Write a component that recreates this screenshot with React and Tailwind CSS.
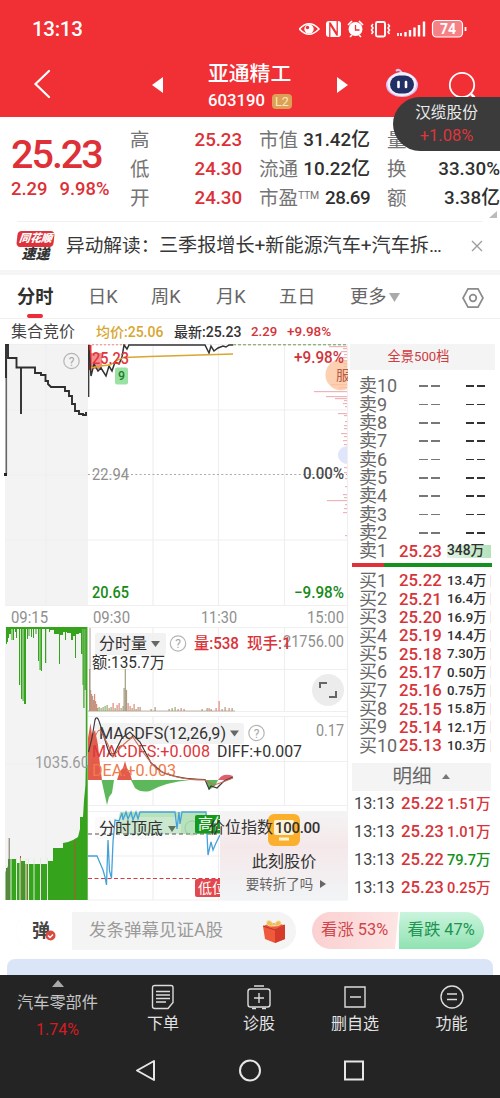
import React from 'react';

const sells = [10, 9, 8, 7, 6, 5, 4, 3, 2];
const buys = [
  ['25.22', '13.4万'], ['25.21', '16.4万'], ['25.20', '16.9万'], ['25.19', '14.4万'], ['25.18', '7.30万'],
  ['25.17', '0.50万'], ['25.16', '0.75万'], ['25.15', '15.8万'], ['25.14', '12.1万'], ['25.13', '10.3万'],
];
const trades = [['25.22', '1.51万', true], ['25.23', '1.01万', true], ['25.22', '79.7万', false], ['25.23', '0.25万', true]];

function T({ x, y, w, s = 16, fill = '#8f8f8f', weight = 400, children }) {
  return (
    <text x={x} y={y + s * 0.36} fontSize={s} fill={fill} fontWeight={weight} textLength={w} lengthAdjust="spacingAndGlyphs">
      {children}
    </text>
  );
}

function Help({ x, y }) {
  return (
    <g>
      <circle cx={x} cy={y} r="7.7" fill="none" stroke="#b5b5b5" strokeWidth="1.2" />
      <text x={x} y={y + 4.5} fontSize="12" textAnchor="middle" fill="#a8a8a8">?</text>
    </g>
  );
}

// Call-auction bars hanging from the top edge: [x, width, bottom]
const hang = [
  [6, 1, 644], [7, 1, 642], [8, 1, 638], [9, 2, 634], [11.5, 1, 640], [13, 1, 640], [15, 1, 632], [16, 1, 638], [19, 1.2, 685],
  [21, 1.3, 699], [22.6, 1, 701], [24, 2, 704], [27, 1, 639], [28.5, 1, 636], [31, 1, 637], [33, 1, 638], [35.5, 1, 634],
  [38, 1, 661], [39.5, 1.2, 670], [41, 1, 671], [45, 1.2, 663], [49, 1, 632], [50, 4, 630], [54, 5, 634], [59, 1, 664],
  [60, 3, 635], [63, 4, 632], [65, 1, 640], [67, 4, 633], [71, 2, 640], [73, 3, 636], [75, 1, 658], [76, 3, 634],
  [79, 2, 633], [81, 1.5, 654], [82.5, 1, 685], [83.3, 1.2, 708], [84.5, 1.3, 690], [85.8, 1, 900],
];

// Turnover bars: [x, top, colour]
const vol = [
  [89.5, 669, '#a79b80'], [90.5, 690, '#a79b80'], [91.5, 694, '#e2867a'], [92.5, 696, '#a8a68a'], [93.5, 700, '#e2867a'], [94.5, 694, '#e2867a'],
  [95.5, 701, '#a8a68a'], [96.5, 704, '#e2867a'], [97.5, 708, '#8fae6e'], [99, 707, '#8fae6e'], [101, 708, '#8fae6e'],
  [103, 707, '#8fae6e'], [105, 706, '#8fae6e'], [107, 705, '#8fae6e'], [109, 708, '#e2867a'], [111, 707, '#8fae6e'],
  [113, 703, '#e2867a'], [115, 708, '#8fae6e'], [117, 705, '#e2867a'], [119, 703, '#e2867a'], [121, 708, '#8fae6e'],
  [123, 706, '#a79b80'], [124, 688, '#a79b80'], [125.2, 669, '#a79b80'], [126.4, 690, '#a79b80'], [128, 703, '#e2867a'],
  [130, 706, '#e2867a'], [132, 708, '#8fae6e'], [134, 704, '#e2867a'], [136, 709, '#8fae6e'], [138, 707, '#e2867a'],
  [140, 707, '#a79b80'], [151, 709, '#a79b80'], [155, 707, '#a79b80'], [169, 709, '#a79b80'], [172, 708, '#a79b80'],
  [175, 707, '#8fae6e'], [178, 709, '#a79b80'], [181, 708, '#e2867a'], [184, 709, '#a79b80'], [202, 709, '#a79b80'],
  [207, 708, '#a79b80'], [209, 708, '#e2867a'], [211, 709, '#a79b80'], [216, 708, '#e2867a'], [219, 701, '#e2867a'],
  [222, 709, '#a79b80'], [225, 707, '#a79b80'], [229, 708, '#e2867a'], [232, 708, '#a79b80'],
];

// Price distribution lines along the right edge: [y, width]
const dist = [
  [346, 18], [348, 4], [351, 6], [354, 3], [357, 5], [360, 3], [363, 4], [366, 3], [384, 16], [387, 8], [391, 33], [396, 21], [398, 12],
  [400, 3], [403, 4], [406, 2], [413, 9], [415, 3], [421, 2], [425, 3], [428, 3], [433, 6], [436, 3], [440, 4], [444, 3], [447, 3],
  [450, 2], [453, 4], [457, 3], [462, 3], [467, 3], [472, 3], [478, 2], [486, 2], [494, 4], [497, 3], [500, 20], [504, 2],
  [508, 3], [512, 4], [535, 2],
];

const gaps = [11, 16.5, 20, 26, 28.5, 34, 40.5, 47.5];

function Chart() {
  return (
    <svg className="block" width="350" height="562" viewBox="0 344 350 562">
      {/* grid */}
      <rect x="5" y="344" width="83" height="261" fill="#f3f3f3" />
      <rect x="5" y="627" width="83" height="273" fill="#f3f3f3" />
      <g stroke="#efefef" strokeWidth="1.2">
        <path d="M46 344V605M153 344V605M218.5 344V605M284.5 344V605M5 410H347M5 475H88M5 540H347M5 605.5H347M5 344.5H347" />
        <path d="M46 627V900M153 627V711M218.5 627V711M284.5 627V711M88 627.5H347M88 669.5H347M88 711.5H347M153 717V805M218.5 717V805M284.5 717V805M88 716.5H347M88 761.5H347M88 805.5H347" />
        <path d="M88 811.5H347M88 856H347M88 900H347M153 811V900M218.5 811V900M347.5 344V900M5 764H88" />
      </g>
      <path d="M88 474.5H347" stroke="#aaa" strokeWidth="1" strokeDasharray="2 2.3" />
      <path d="M88 344.8H129" stroke="#e88" strokeWidth="1" strokeDasharray="2 2" />

      {/* price distribution */}
      <g fill="#eeb4b9">
        {dist.map(([y, w]) => <rect key={y} x={347 - w} y={y} width={w} height="1.2" />)}
      </g>
      <path d="M347 360.500A15.500 15.500 0 1 0 347 389z" fill="#fbc49c" fillOpacity=".8" />
      <path d="M347 446q-9 2-9 9t9 9z" fill="#dfe5fb" />
      <svg x="336" y="364" width="12" height="20" viewBox="0 0 12 20"><text x="0" y="15.500" fontSize="14" fill="#b75a46">服</text></svg>

      {/* call auction price */}
      <path d="M6.300 360V474" stroke="#666" strokeWidth="1.6" />
      <rect x="4" y="473" width="3" height="3" fill="#222" />
      <path d="M6 378V345H8V358H16.500V367.500H35V373H41V375H45.500V381H48V384L51 387H65V391H69V396H72V404H75V411H79V414H83V415H86V412M21 367.500V414M8 345V358" fill="none" stroke="#2e2e2e" strokeWidth="1.9" />

      {/* intraday price */}
      <rect x="88" y="345" width="3.500" height="25" fill="#e92f36" />
      <rect x="90" y="353" width="12" height="16" rx="1" fill="#e92f36" fillOpacity=".55" />
      <path d="M88.700 345V397" stroke="#333" strokeWidth="1.3" />
      <path d="M89 350L91 376L94 364L98 371L101 368L106 376L109 366L112 371L115 362L119 364L122 357L124 345L127 349L129 345H205L209 353L211 346L214 351L218 348L223 346L226 347L229 345H233" fill="none" stroke="#333" strokeWidth="1.5" />
      <path d="M91 368L100 366L110 365L118 360L124 357.500L150 356.500L233 354" fill="none" stroke="#dba62b" strokeWidth="1.3" />
      <path d="M233 344.800H347" stroke="#6b9a4d" strokeWidth="1" strokeDasharray="3 2" />
      <T x={92} y={358} w={37} fill="#e0363c" weight={500}>25.23</T>
      <rect x="115" y="367.500" width="13" height="17" rx="2" fill="#9ae2a1" />
      <T x={118} y={375.5} w={7} s={13} fill="#257a2f" weight={500}>9</T>
      <Help x={71.500} y={361} />
      <T x={294} y={357.500} w={50} fill="#d2333b" weight={500}>+9.98%</T>
      <T x={92} y={474} w={37}>22.94</T>
      <T x={303} y={473.500} w={41} fill="#4b4b4b" weight={500}>0.00%</T>
      <T x={92} y={592.500} w={37} fill="#168a16" weight={500}>20.65</T>
      <T x={294} y={592.500} w={50} fill="#168a16" weight={500}>−9.98%</T>
      <T x={11} y={617} w={37}>09:15</T>
      <T x={93} y={617} w={37}>09:30</T>
      <T x={201} y={617} w={36}>11:30</T>
      <T x={307} y={617} w={37}>15:00</T>

      {/* call auction volume */}
      <path d="M6 628H86" stroke="#36a31d" strokeWidth="2" />
      {hang.map(([x, w, b]) => <rect key={x} x={x} y="627" width={w} height={b - 627} fill="#36a31d" />)}
      <path d="M5.500 900V872L8 866V859H16V863H20V861H25V864H47V861H53V848H63V843L68 842L73 840L78 837L80 829V817H83L84 800L85.500 785L86 765H87.500V900z" fill="#36a31d" />
      <path d="M86.800 627V900" stroke="#36a31d" strokeWidth="1.2" />
      <path d="M9.200 838V900M41 864V900M24 864V900M6.500 868V900" stroke="#776f5d" strokeWidth="1" />
      <path d="M20.500 856V900M27 864V900M75 840V900" stroke="#a95b35" strokeWidth="1" />
      {gaps.map((x) => <path key={x} d={`M${x} 858V900`} stroke="#dfeedd" strokeWidth="1" />)}
      <svg x="34" y="750" width="53" height="24"><text x="1" y="17.500" fontSize="16" fill="#9b9b9b" textLength="54" lengthAdjust="spacingAndGlyphs">1035.60</text></svg>

      {/* turnover */}
      <path d="M90 628V711" stroke="#aaa39b" strokeWidth="1" />
      <path d="M88 711H235" stroke="#b8a58f" strokeWidth=".8" />
      {vol.map(([x, t, c]) => <rect key={x} x={x - 0.5} y={t} width="1.2" height={711 - t} fill={c} />)}
      <rect x="95" y="633" width="71" height="22" rx="2" fill="#f0f0f0" fillOpacity=".85" />
      <T x={99} y={643.5} w={48} fill="#333">分时量</T>
      <path d="M151 641h9l-4.500 6z" fill="#666" />
      <Help x={178} y={643.5} />
      <T x={283} y={641.5} w={61}>21756.00</T>
      <T x={194} y={643.5} w={45} fill="#d8323a" weight={500}>量:538</T>
      <T x={247} y={643.5} w={44} fill="#d8323a" weight={500}>现手:1</T>
      <T x={92} y={662} w={73} fill="#333">额:135.7万</T>

      {/* MACD */}
      <rect x="95" y="723" width="149" height="21" rx="2" fill="#f0f0f0" fillOpacity=".85" />
      <path d="M88 780V738L90.500 723L92 735L95 730L98 745L100 765L102 780zM117 780L120 771L123 768L125 761L127 768L130 773L132 780z" fill="#e45a4b" />
      <path d="M101.500 780L105 796L107 805L109 797L112 793L114 780zM131 780L135 788Q141 793 150 791Q166 782 190 780zM206 780L209 790L215 786L218 780z" fill="#5cb85b" />
      <path d="M218 780Q223 772 233 776L230 780z" fill="#dd6075" />
      <T x={99} y={733.5} w={127} fill="#333">MACDFS(12,26,9)</T>
      <path d="M230 730.500h9l-4.500 6z" fill="#666" />
      <Help x={256.500} y={733} />
      <T x={316} y={730.500} w={28}>0.17</T>
      <T x={92} y={751.500} w={118} fill="#df343a">MACDFS:+0.008</T>
      <T x={217} y={751.500} w={85} fill="#333">DIFF:+0.007</T>
      <T x={92} y={770} w={84} fill="#f07b4b">DEA:+0.003</T>
      <path d="M88.500 752L92 738L95 720Q97 714 100 724L106 743Q112 765 116 750L122 738L130 732L140 742L151 763L162 772Q177 779 205 779.500L209 789L211 786L217 788L224 781L233 777" fill="none" stroke="#403a38" strokeWidth="1.2" />
      <path d="M89 770Q94 730 100 730Q109 745 113 757Q122 744 133 737Q146 758 157 769Q175 780 205 780L214 785L223 782L233 778" fill="none" stroke="#cf6c50" strokeWidth="1.1" />

      {/* top / bottom position */}
      <path d="M116 834L120 812H206L210 834z" fill="#b7e2bc" />
      <rect x="95" y="817" width="86" height="22" rx="2" fill="#f0f0f0" fillOpacity=".35" />
      <path d="M88 834H217" stroke="#555" strokeWidth="1" strokeDasharray="4 3" />
      <path d="M88 878.500H220" stroke="#d83c44" strokeWidth="1.2" strokeDasharray="4 2.500" />
      <path d="M88 856H97L100 863L103 870L105 877L106.500 885L108 840L109.500 871L111.500 878L113 842L115 820L119 821L122 813L123 820L126 812L128 819L131 812L133 820L136 812L138 819L140 812H175L177 829L179 812L180 824L182 812H206L208 855L211 842L213 850L216 843L220 835" fill="none" stroke="#45a2d8" strokeWidth="1.3" />
      <T x={99} y={828.500} w={64} fill="#333">分时顶底</T>
      <path d="M168 826h8l-4 6z" fill="#5d7160" />
      <circle cx="192" cy="828" r="7" fill="none" stroke="#a0cba2" />
      <rect x="195" y="815" width="30" height="18.500" rx="2" fill="#18991e" />
      <T x={198} y={823.500} w={30} s={15} fill="#fff">高位</T>
      <rect x="195" y="879" width="30" height="18" rx="2" fill="#e2484f" />
      <T x={198} y={887.500} w={28} s={14} fill="#fff">低位</T>
    </svg>
  );
}

function StatusIcons() {
  return (
    <svg width="168" height="20" viewBox="299 19 168 20" fill="none" stroke="#fff" strokeWidth="1.600">
      <path d="M299.500 29Q309 18.500 319 29Q309 39.500 299.500 29z" />
      <circle cx="309" cy="29" r="4.700" fill="#fff" stroke="none" /><circle cx="307.500" cy="27.500" r="1.700" fill="#f03035" stroke="none" />
      <rect x="326" y="21" width="15" height="16" rx="3" fill="#fff" stroke="none" />
      <path d="M329.800 37V24l7.200 11.500M337.200 21v13L330 22.500" stroke="#f03035" strokeWidth="1.300" />
      <circle cx="355.500" cy="29" r="7" fill="#fff" stroke="none" /><path d="M355.500 25v5h4" stroke="#f03035" strokeWidth="1.300" /><path d="M348 25l4-4M363 25l-4-4M350 37l2-2M361 37l-2-2" />
      <rect x="376" y="22" width="9" height="14.500" rx="1.500" strokeWidth="1.900" /><path d="M373 24l-1.500 2 1.500 2-1.500 2 1.500 2-1.500 2M388 24l1.500 2-1.500 2 1.500 2-1.500 2 1.500 2" strokeWidth="1.500" />
      <path d="M398 33v3M401 33v3" strokeWidth="1.800" /><path d="M405.500 32v4.500M410 30v6.500M414.500 27.500v9M419 25v11.500M424 21.500v15" strokeWidth="2.400" />
      <rect x="432.500" y="20.500" width="30" height="16.500" rx="4" fill="#f58185" strokeWidth="1.200" /><path d="M465.500 27v4" strokeWidth="1.800" />
      <text x="448" y="34" fontSize="14" fontWeight="700" fill="#fff" stroke="none" textAnchor="middle">74</text>
    </svg>
  );
}

function Quote({ label, value, red, sup }) {
  return (
    <div className="flex h-[29px] items-center justify-between whitespace-nowrap text-[18.800px]">
      <span className="flex items-center text-[19.5px] text-[#747474]">{label}{sup && <span className="-mt-1 text-[10.500px] tracking-tight">{sup}</span>}</span>
      <span className={red ? 'font-medium tracking-[-0.100px] text-[#dd3037]' : sup ? 'font-medium tracking-[-0.600px] text-[#303030]' : 'font-medium text-[#303030]'}>{value}</span>
    </div>
  );
}

function NavItem({ label, className, children }) {
  return (
    <div className={`flex flex-col items-center pt-2 ${className}`}>
      <svg width="28" height="28" viewBox="0 0 28 28" fill="none" stroke="#dcdcdc" strokeWidth="1.400">{children}</svg>
      <span className="mt-px text-[16px] leading-6 text-[#e3e3e3]">{label}</span>
    </div>
  );
}

export default function App() {
  return (
    <div className="relative flex h-[1098px] w-[500px] flex-col overflow-hidden bg-white font-[Roboto,'Noto_Sans_CJK_SC',sans-serif] leading-none">
      <header className="h-[117px] shrink-0 bg-[#f03035] text-white">
        <div className="flex h-[58px] items-center justify-between pl-8 pr-[33px]">
          <span className="pt-px text-[20.5px] font-medium tracking-[-0.3px]">13:13</span>
          <StatusIcons />
        </div>
        <div className="flex h-[59px] pl-[33px]">
          <svg className="mt-2 w-[119px] shrink-0" height="40" viewBox="33 66 119 40" fill="none" stroke="#fff" strokeWidth="2.200" strokeLinecap="round"><path d="M49 71L35.500 84L49 97" /></svg>
          <svg className="mt-[18px] shrink-0" width="12" height="18"><path d="M0 9L11 1v16z" fill="#fff" /></svg>
          <div className="ml-[44px] w-[86px] shrink-0 pt-1 whitespace-nowrap">
            <div className="text-[20.800px] leading-6 font-medium">亚通精工</div>
            <div className="mt-[5px] flex items-center gap-[7px]"><span className="text-[16.700px] leading-5 font-medium">603190</span><span className="rounded-sm bg-[#dca057] px-[3px] text-[12.500px] leading-[15px] text-[#ffe8bc]">L2</span></div>
          </div>
          <svg className="ml-[43px] mt-[18px] shrink-0" width="12" height="18"><path d="M0 1l11 8L0 17z" fill="#fff" /></svg>
          <svg className="ml-[36px] mt-2 shrink-0" width="36" height="36" viewBox="0 0 36 36">
            <path d="M11 5q3-3 6 2" fill="none" stroke="#d5c5f4" strokeWidth="2" />
            <ellipse cx="17" cy="19" rx="16" ry="12" fill="#dabef1" /><ellipse cx="17" cy="18" rx="14.500" ry="12" fill="#f0effd" />
            <rect x="5" y="9.500" width="24" height="18" rx="9" fill="#222f64" /><path d="M13.500 16v5M21 16v5" stroke="#fff" strokeWidth="2.600" strokeLinecap="round" />
          </svg>
          <svg className="ml-[26px] mt-[12px] shrink-0" width="34" height="34" fill="none" stroke="#fff" strokeWidth="1.800"><circle cx="15" cy="15" r="12.200" /><path d="M24 24l3.500 3.500" strokeWidth="2.500" /></svg>
        </div>
      </header>

      <section className="flex h-[104px] shrink-0 pt-[9px]">
        <div className="w-[130px] pl-[11px] pt-3 text-[#dd3037]">
          <div className="text-[39.500px] leading-[34px] font-medium tracking-[-2px]">25.23</div>
          <div className="mt-[7px] flex gap-3 text-[18.400px] leading-5 font-medium"><span>2.29</span><span>9.98%</span></div>
        </div>
        <div className="w-[112px]"><Quote label="高" value="25.23" red /><Quote label="低" value="24.30" red /><Quote label="开" value="24.30" red /></div>
        <div className="ml-[17px] w-[111px]"><Quote label="市值" value="31.42亿" /><Quote label="流通" value="10.22亿" /><Quote label="市盈" sup="TTM" value="28.69" /></div>
        <div className="ml-[17px] w-[113px]"><Quote label="量" value="" /><Quote label="换" value="33.30%" /><Quote label="额" value="3.38亿" />
          <svg className="-mt-[2px] ml-auto mr-[3px]" width="8" height="7"><path d="M8 0v7H0z" fill="#bbb" /></svg>
        </div>
      </section>

      <section className="ml-[17px] flex h-[49px] w-[466px] shrink-0 items-center border-t border-[#f1f1f1]">
        <div className="flex w-[51px] flex-col items-center pr-3 italic">
          <span className="w-[37px] -skew-x-6 rounded-sm bg-[#dc343a] text-center text-[11px] leading-[16px] font-black text-white">同花顺</span>
          <span className="text-[14px] leading-[15px] font-black text-[#333]">速递</span>
        </div>
        <span className="flex w-[390px] shrink-0 items-center whitespace-nowrap text-[18.700px] text-[#373737]"><span className="w-[93px]">异动解读：</span><span className="text-[19.100px]">三季报增长+新能源汽车+汽车拆…</span></span>
        <svg className="ml-[14px] shrink-0" width="14" height="14" stroke="#9b9b9b" strokeWidth="1.300"><path d="M2 2l10 10M12 2L2 12" /></svg>
      </section>
      <div className="h-[5px] shrink-0 bg-[#f5f5f5]" />

      <nav className="flex h-[44px] shrink-0 items-center border-b border-[#efefef] pl-[17px] pt-[2px] text-[18.200px] text-[#666]">
        <div className="relative flex h-full w-[71px] items-center font-bold text-[#303030]">分时<i className="absolute bottom-0 left-[10px] h-[4px] w-4 rounded-full bg-[#ec2c3a]" /></div>
        <span className="w-[63px]">日K</span><span className="w-[65px]">周K</span><span className="w-[63px]">月K</span><span className="w-[71px]">五日</span>
        <span className="flex w-[112px] items-center gap-[3px]">更多<svg width="11" height="9"><path d="M0 0h11L5.500 9z" fill="#aaa" /></svg></span>
        <svg width="22" height="22" fill="none" stroke="#8b8b8b" strokeWidth="1.700"><path d="M6 1.800h10L21 11l-5 9.200H6L1 11z" /><circle cx="11" cy="11" r="3.300" /></svg>
      </nav>

      <div className="flex h-[25px] shrink-0 items-center whitespace-nowrap pl-[11px] text-[14px]">
        <span className="w-[85px] text-[16px] text-[#444]">集合竞价</span><span className="w-[78px] font-medium text-[#d8a62f]">均价:25.06</span>
        <span className="w-[77px] font-medium text-[#333]">最新:25.23</span><span className="w-[36px] text-[13.200px] font-medium text-[#d5333a]">2.29</span><span className="text-[13.500px] font-medium text-[#d5333a]">+9.98%</span>
      </div>

      <main className="flex h-[562px] shrink-0">
        <div className="relative w-[350px] shrink-0">
          <Chart />
          <button className="absolute left-[312px] top-[330px] flex h-8 w-8 items-center justify-center rounded-full bg-[#ececec]">
            <svg width="18" height="18" fill="none" stroke="#666" strokeWidth="2"><path d="M1 7V2h7M17 10v6h-7" /></svg>
          </button>
          <div className="absolute left-[220px] top-[467px] flex h-[89px] w-[128px] flex-col items-center bg-linear-to-b from-[#f4f4f4] via-[#f5e8ea] via-40% to-[#f1f4f6] pt-[3px]">
            <div className="flex h-8 w-8 items-center justify-center rounded-md bg-[#fbb02d]">
              <svg width="22" height="24"><rect x="1" y="2" width="20" height="15" rx="2" fill="#fff3d6" /><path d="M6 21h10" stroke="#fff3d6" strokeWidth="3" /></svg>
            </div>
            <div className="mt-[6px] whitespace-nowrap text-[16.200px] leading-5 text-[#333]">此刻股价</div>
            <div className="mt-[2px] ml-1 flex items-center gap-[7px] whitespace-nowrap text-[13.500px] leading-5 text-[#666]">要转折了吗<svg width="6" height="8"><path d="M0 0l6 4-6 4z" fill="#666" /></svg></div>
          </div>
          <div className="absolute left-[209px] top-[474px] whitespace-nowrap text-[16px] leading-5 text-[#333]">价位指数<span className="ml-[2px] text-[15px] font-medium tracking-[-0.300px]">100.00</span></div>
        </div>

        <aside className="flex w-[145px] flex-col whitespace-nowrap text-[#686868]">
          <div className="flex h-[26px] shrink-0 items-center justify-center bg-[#f4f4f4] pr-2 text-[13.200px] text-[#cf3b41]">全景500档</div>
          <div className="pt-[7px] pl-[9px]">
            {sells.map((n) => (
              <div key={n} className="flex h-[18.350px] items-center text-[18px]">
                <span className="w-[60px]">卖{n}</span>
                <span className="flex w-[47px] gap-[3px]"><i className="h-[1.500px] w-[9px] bg-[#777]" /><i className="h-[1.500px] w-[9px] bg-[#777]" /></span>
                <span className="flex gap-[3px]"><i className="h-[1.500px] w-2 bg-[#333]" /><i className="h-[1.500px] w-2 bg-[#333]" /></span>
              </div>
            ))}
            <div className="flex h-[18.350px] items-center text-[18px]">
              <span className="w-[40px]">卖1</span><span className="w-[48px] text-[16.800px] font-medium text-[#d7343a]">25.23</span>
              <span className="flex h-[13px] w-[44px] items-center bg-linear-to-r from-[#e3f5e5] to-[#b5e2bb] text-[13.800px] font-medium text-[#303030]">348万</span>
            </div>
          </div>
          <div className="ml-[2px] mt-[3px] flex h-[4px] w-[140px] shrink-0"><i className="w-8 bg-[#df3138]" /><i className="flex-1 bg-[#159120]" /></div>
          <div className="pt-[4px] pl-[9px]">
            {buys.map(([p, v], i) => (
              <div key={p} className="flex h-[18.350px] items-center text-[18px]">
                <span className="w-[40px] shrink-0">买{i + 1}</span><span className="w-[48px] shrink-0 text-[16.800px] font-medium text-[#d7343a]">{p}</span>
                <span className="w-[43px] text-[13.200px] font-medium text-[#303030]">{v}</span><i className="h-3 w-px shrink-0 bg-[#f3e4e6]" />
              </div>
            ))}
          </div>
          <div className="mt-[8px] ml-[2px] flex h-[28px] w-[139px] shrink-0 items-center justify-center gap-[10px] bg-[#f4f4f4] pr-[1px] text-[19.500px]">明细<svg width="8" height="7"><path d="M4 1l4 5H0z" fill="#777" /></svg></div>
          <div className="pl-[4px] -mt-[1px]">
            {trades.map(([p, v, up], i) => (
              <div key={i} className="flex h-[28px] items-center text-[16.800px]">
                <span className="w-[47px] shrink-0 text-[16.300px] text-[#444]">13:13</span><span className="w-[46px] shrink-0 font-medium text-[#d7343a]">{p}</span>
                <span className={up ? 'text-[14.600px] font-medium text-[#d7343a]' : 'text-[14.600px] font-medium text-[#159120]'}>{v}</span>
              </div>
            ))}
          </div>
        </aside>
      </main>

      <section className="flex h-[53px] shrink-0 items-start pl-4 pt-[6px]">
        <div className="flex h-[38px] w-[280px] items-center rounded-full bg-[#f4f4f4]">
          <div className="relative flex h-full w-[56px] items-center rounded-l-full bg-white pl-4 text-[18px] font-bold text-[#444]">弹
            <svg className="absolute left-[29px] top-[18px]" width="11" height="11"><circle cx="5.500" cy="5.500" r="5" fill="#d94b40" /><path d="M3 5.500l2 2 3-3" fill="none" stroke="#fff" strokeWidth="1.300" /></svg>
          </div>
          <span className="ml-[17px] text-[17.500px] text-[#9b9b9b]">发条弹幕见证A股</span>
          <svg className="ml-auto mr-[10px]" width="24" height="26">
            <path d="M1 8l8-3 14 2v14l-10 4-10-4z" fill="#ef593c" /><path d="M13 12l10-4v13l-10 4z" fill="#d43b2b" /><path d="M1 8l12 4 10-5" fill="none" stroke="#b93729" />
            <path d="M12 8Q3 9 5 3q4-2 7 5q3-8 7-4 1 4-7 4" fill="#edbd57" stroke="#fbe3a8" strokeWidth=".8" />
          </svg>
        </div>
        <div className="ml-[16px] flex h-[37px] w-[172px] text-[16.400px]">
          <div className="flex w-[87px] items-center whitespace-nowrap rounded-l-full bg-linear-to-r from-[#fbd0d1] to-[#fce5e4] pl-[9px] text-[#ce454a] [clip-path:polygon(0_0,100%_0,96%_100%,0_100%)]">看涨 53%</div>
          <div className="flex w-[86px] items-center whitespace-nowrap rounded-r-full bg-linear-to-b from-[#caf4dd] to-[#8fe2b1] pl-[9px] text-[#209350] [clip-path:polygon(2%_0,100%_0,100%_100%,-2%_100%)]">看跌 47%</div>
        </div>
      </section>
      <div className="mx-[7px] h-[16px] shrink-0 rounded-t-lg bg-[#dae6f8]" />

      <footer className="flex h-[123px] shrink-0 flex-col bg-[#242424]">
        <div className="flex h-[70px]">
          <div className="flex w-[115px] flex-col items-center pt-[5px]">
            <svg width="12" height="7"><path d="M6 0l6 7H0z" fill="#aaa" /></svg>
            <span className="mt-[4px] text-[16.200px] leading-6 text-[#c4c4c4]">汽车零部件</span>
            <span className="mt-[5px] text-[16px] leading-5 text-[#d51c22]">1.74%</span>
          </div>
          <NavItem label="下单" className="w-[96px]"><path d="M6 2.500h16q2 0 2 2v15l-5 6H6q-2.500 0-2.500-2V5q0-2.500 2.500-2.500zM7 8.500h14M7 12h14M7 15.500h14M7 19h10" /></NavItem>
          <NavItem label="诊股" className="w-[96px]"><rect x="3" y="6" width="22" height="18" rx="2.500" /><path d="M9 3h10M14 10v10M9 15h10M7 25.500h4M17 25.500h4" /></NavItem>
          <NavItem label="删自选" className="w-[96px]"><path d="M4 4h20v20H4zM9 14h11" /></NavItem>
          <NavItem label="功能" className="w-[97px]"><circle cx="14" cy="14" r="11" /><path d="M9 11h10M9 16.500h10" /></NavItem>
        </div>
        <div className="flex h-[52px] items-center pl-[134px]">
          <svg width="235" height="28" fill="none" stroke="#e6e6e6" strokeWidth="2"><path d="M20 4v19L3 13.500z" strokeLinejoin="round" /><circle cx="116" cy="13.500" r="10" /><rect x="211" y="4.500" width="18" height="18" /></svg>
        </div>
      </footer>

      <div className="absolute left-[393px] top-[97px] flex h-[54px] w-[107px] flex-col items-center rounded-l-[27px] bg-[#3b3b3b] pt-1">
        <span className="text-[15.700px] leading-6 text-[#eaeaea]">汉缆股份</span><span className="text-[16.500px] leading-[22px] text-[#df353b]">+1.08%</span>
      </div>
    </div>
  );
}
